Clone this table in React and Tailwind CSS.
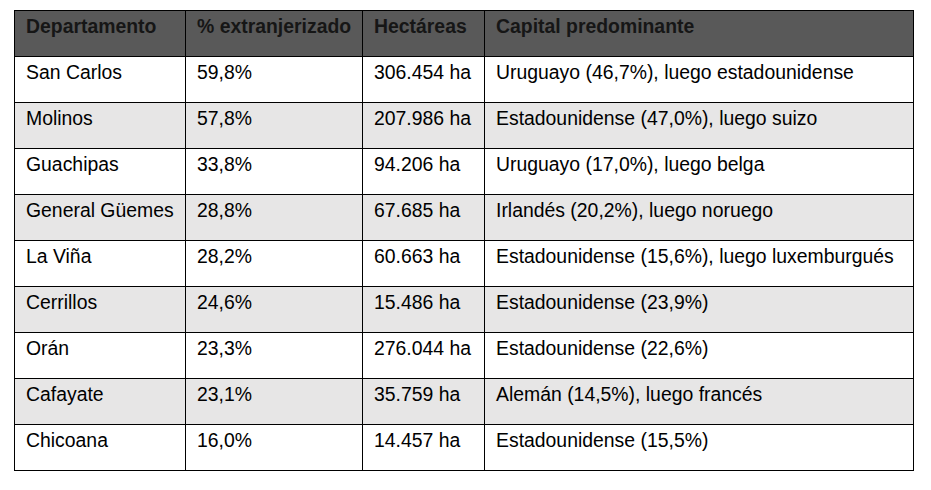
import React from "react";

const rows = [
  ["San Carlos", "59,8%", "306.454 ha", "Uruguayo (46,7%), luego estadounidense"],
  ["Molinos", "57,8%", "207.986 ha", "Estadounidense (47,0%), luego suizo"],
  ["Guachipas", "33,8%", "94.206 ha", "Uruguayo (17,0%), luego belga"],
  ["General Güemes", "28,8%", "67.685 ha", "Irlandés (20,2%), luego noruego"],
  ["La Viña", "28,2%", "60.663 ha", "Estadounidense (15,6%), luego luxemburgués"],
  ["Cerrillos", "24,6%", "15.486 ha", "Estadounidense (23,9%)"],
  ["Orán", "23,3%", "276.044 ha", "Estadounidense (22,6%)"],
  ["Cafayate", "23,1%", "35.759 ha", "Alemán (14,5%), luego francés"],
  ["Chicoana", "16,0%", "14.457 ha", "Estadounidense (15,5%)"],
];

const headers = ["Departamento", "% extranjerizado", "Hectáreas", "Capital predominante"];

const App = () => {
  return (
    <div className="min-h-[490px] bg-white pl-[14px] pt-[10px] font-['Liberation_Sans',Arial,sans-serif] text-[19.4px] leading-[22px] text-black">
      <table className="w-[899px] table-fixed border-collapse">
        <colgroup>
          <col className="w-[171px]" />
          <col className="w-[177px]" />
          <col className="w-[122px]" />
          <col className="w-[429px]" />
        </colgroup>
        <thead>
          <tr className="h-[46px] bg-[#595959]">
            {headers.map((h) => (
              <th
                key={h}
                className="border border-black pl-[11px] pr-0 pt-[4px] text-left align-top font-bold text-[#161616] whitespace-nowrap"
              >
                {h}
              </th>
            ))}
          </tr>
        </thead>
        <tbody>
          {rows.map((row, i) => (
            <tr key={row[0]} className={i % 2 === 1 ? "h-[46px] bg-[#e7e6e6]" : "h-[46px] bg-white"}>
              {row.map((cell, j) => (
                <td key={j} className="border border-black pl-[11px] pr-0 pt-[4px] align-top whitespace-nowrap">
                  {cell}
                </td>
              ))}
            </tr>
          ))}
        </tbody>
      </table>
    </div>
  );
};

export default App;
